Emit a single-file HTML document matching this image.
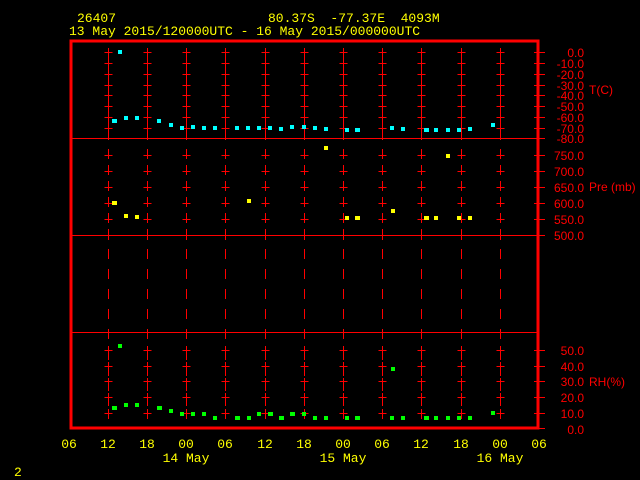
<!DOCTYPE html>
<html><head><meta charset="utf-8"><style>
html,body{margin:0;padding:0;background:#000;width:640px;height:480px;overflow:hidden}
svg{display:block}
text{font-family:"Liberation Mono","DejaVu Sans Mono",monospace;font-size:13px}
.y{fill:#ff0}.r{fill:#f00}
.r text{font-family:"Liberation Sans",sans-serif;font-size:12px}
</style></head><body>
<svg width="640" height="480" viewBox="0 0 640 480" xmlns="http://www.w3.org/2000/svg">
<defs>
<g id="col" stroke="#f00" stroke-width="1" shape-rendering="crispEdges">
<line x1="0.5" y1="48" x2="0.5" y2="140"/>
<path d="M-3.5 52.5h8M-3.5 63.5h8M-3.5 74.5h8M-3.5 85.5h8M-3.5 95.5h8M-3.5 106.5h8M-3.5 117.5h8M-3.5 128.5h8"/>
<path d="M0.5 149v10M0.5 165v10M0.5 181v10M0.5 197v10M0.5 213v10M0.5 229v11"/>
<path d="M-3.5 155.5h8M-3.5 171.5h8M-3.5 187.5h8M-3.5 203.5h8M-3.5 219.5h8"/>
<path d="M0.5 249v10M0.5 269v10M0.5 289v10M0.5 309v10M0.5 329v10"/>
<path d="M0.5 346v14M0.5 362v14M0.5 378v13M0.5 393v13M0.5 409v10"/>
<path d="M-3.5 350.5h8M-3.5 366.5h8M-3.5 381.5h8M-3.5 397.5h8M-3.5 413.5h8"/>
</g>
</defs>
<use href="#col" x="108"/><use href="#col" x="147"/><use href="#col" x="186"/><use href="#col" x="225"/><use href="#col" x="265"/><use href="#col" x="304"/><use href="#col" x="343"/><use href="#col" x="382"/><use href="#col" x="421"/><use href="#col" x="461"/><use href="#col" x="500"/>
<g stroke="#f00" shape-rendering="crispEdges">
<path d="M72 138.5H538M72 235.5H538M72 332.5H538" stroke-width="1"/>
<rect x="71" y="41" width="467" height="387" fill="none" stroke-width="3"/>
<path d="M534 52.5h11M534 63.5h11M534 74.5h11M534 85.5h11M534 95.5h11M534 106.5h11M534 117.5h11M534 128.5h11M534 138.5h11M534 155.5h11M534 171.5h11M534 187.5h11M534 203.5h11M534 219.5h11M534 235.5h11M534 350.5h11M534 366.5h11M534 381.5h11M534 397.5h11M534 413.5h11M534 428.5h11"/>
</g>
<g class="r" text-anchor="end">
<text x="584" y="57">0.0</text><text x="584" y="68">-10.0</text><text x="584" y="79">-20.0</text><text x="584" y="90">-30.0</text><text x="584" y="100">-40.0</text><text x="584" y="111">-50.0</text><text x="584" y="122">-60.0</text><text x="584" y="133">-70.0</text><text x="584" y="143">-80.0</text>
<text x="584" y="160">750.0</text><text x="584" y="176">700.0</text><text x="584" y="192">650.0</text><text x="584" y="208">600.0</text><text x="584" y="224">550.0</text><text x="584" y="240">500.0</text>
<text x="584" y="355">50.0</text><text x="584" y="371">40.0</text><text x="584" y="386">30.0</text><text x="584" y="402">20.0</text><text x="584" y="418">10.0</text><text x="584" y="434">0.0</text>
</g>
<g class="r"><text x="589" y="94">T(C)</text><text x="589" y="191" xml:space="preserve">Pre (mb)</text><text x="589" y="386">RH(%)</text></g>
<g class="y">
<text x="77" y="22">26407</text>
<text x="268" y="22" xml:space="preserve">80.37S  -77.37E  4093M</text>
<text x="69" y="35" xml:space="preserve">13 May 2015/120000UTC - 16 May 2015/000000UTC</text>
<g text-anchor="middle">
<text x="69" y="448">06</text><text x="108" y="448">12</text><text x="147" y="448">18</text><text x="186" y="448">00</text><text x="225" y="448">06</text><text x="265" y="448">12</text><text x="304" y="448">18</text><text x="343" y="448">00</text><text x="382" y="448">06</text><text x="421" y="448">12</text><text x="461" y="448">18</text><text x="500" y="448">00</text><text x="539" y="448">06</text>
<text x="186" y="462">14 May</text><text x="343" y="462">15 May</text><text x="500" y="462">16 May</text>
</g>
<text x="14" y="476">2</text>
</g>
<g fill="#0ff">
<rect x="118" y="50" width="4" height="4"/>
<rect x="112" y="119" width="5" height="4"/><rect x="124" y="116" width="4" height="4"/><rect x="135" y="116" width="4" height="4"/><rect x="157" y="119" width="4" height="4"/><rect x="169" y="123" width="4" height="4"/><rect x="180" y="126" width="4" height="4"/><rect x="191" y="125" width="4" height="4"/><rect x="202" y="126" width="4" height="4"/><rect x="213" y="126" width="4" height="4"/><rect x="235" y="126" width="4" height="4"/><rect x="246" y="126" width="4" height="4"/><rect x="257" y="126" width="4" height="4"/><rect x="268" y="126" width="4" height="4"/><rect x="279" y="127" width="4" height="4"/><rect x="290" y="125" width="4" height="4"/><rect x="302" y="125" width="4" height="4"/><rect x="313" y="126" width="4" height="4"/><rect x="324" y="127" width="4" height="4"/><rect x="345" y="128" width="4" height="4"/><rect x="355" y="128" width="5" height="4"/><rect x="390" y="126" width="4" height="4"/><rect x="401" y="127" width="4" height="4"/><rect x="424" y="128" width="5" height="4"/><rect x="434" y="128" width="4" height="4"/><rect x="446" y="128" width="4" height="4"/><rect x="457" y="128" width="4" height="4"/><rect x="468" y="127" width="4" height="4"/><rect x="491" y="123" width="4" height="4"/>
</g>
<g fill="#ff0">
<rect x="112" y="201" width="5" height="4"/><rect x="124" y="214" width="4" height="4"/><rect x="135" y="215" width="4" height="4"/><rect x="247" y="199" width="4" height="4"/><rect x="324" y="146" width="4" height="4"/><rect x="345" y="216" width="4" height="4"/><rect x="355" y="216" width="5" height="4"/><rect x="391" y="209" width="4" height="4"/><rect x="424" y="216" width="5" height="4"/><rect x="434" y="216" width="4" height="4"/><rect x="446" y="154" width="4" height="4"/><rect x="457" y="216" width="4" height="4"/><rect x="468" y="216" width="4" height="4"/>
</g>
<g fill="#0f0">
<rect x="118" y="344" width="4" height="4"/><rect x="112" y="406" width="5" height="4"/><rect x="124" y="403" width="4" height="4"/><rect x="135" y="403" width="4" height="4"/><rect x="157" y="406" width="5" height="4"/><rect x="169" y="409" width="4" height="4"/><rect x="180" y="412" width="4" height="4"/><rect x="191" y="412" width="4" height="4"/><rect x="202" y="412" width="4" height="4"/><rect x="213" y="416" width="4" height="4"/><rect x="235" y="416" width="5" height="4"/><rect x="247" y="416" width="4" height="4"/><rect x="257" y="412" width="4" height="4"/><rect x="268" y="412" width="5" height="4"/><rect x="279" y="416" width="5" height="4"/><rect x="290" y="412" width="5" height="4"/><rect x="302" y="412" width="4" height="4"/><rect x="313" y="416" width="4" height="4"/><rect x="324" y="416" width="4" height="4"/><rect x="345" y="416" width="4" height="4"/><rect x="355" y="416" width="5" height="4"/><rect x="391" y="367" width="4" height="4"/><rect x="390" y="416" width="4" height="4"/><rect x="401" y="416" width="4" height="4"/><rect x="424" y="416" width="5" height="4"/><rect x="434" y="416" width="4" height="4"/><rect x="446" y="416" width="4" height="4"/><rect x="457" y="416" width="4" height="4"/><rect x="468" y="416" width="4" height="4"/><rect x="491" y="411" width="4" height="4"/>
</g>
</svg>
</body></html>
